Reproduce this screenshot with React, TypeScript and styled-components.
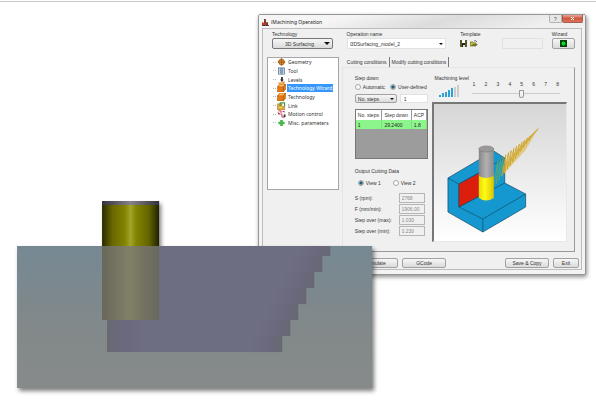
import React from "react";
import styled, { createGlobalStyle, css } from "styled-components";

const GlobalStyle = createGlobalStyle`
  * { box-sizing: border-box; }
  body { margin: 0; background: #fff; }
  button, input, select { font: inherit; color: inherit; margin: 0; }
`;

const Page = styled.main`
  position: relative;
  min-height: 100vh;
  padding-top: 1px;
  font: 5px/8px "Liberation Sans", Arial, sans-serif;
  color: #333;
`;

const Rule = styled.hr`
  height: 1px;
  margin: 0 0 12px;
  border: 0;
  background: #c4c8c6;
`;

const Dialog = styled.section`
  margin: 0 10px 0 43.3%;
  padding: 0 3px 4px;
  border: 1px solid #969696;
  border-radius: 2px;
  background: #f3f3f3;
  box-shadow: 1px 2px 4px rgba(0, 0, 0, 0.45);
`;

const TitleBar = styled.header`
  display: flex;
  align-items: center;
  height: 13px;
  margin: 0 -3px;
  padding: 0 2px 0 3px;
  gap: 2px;
  background: linear-gradient(165deg, #f5f5f5 25%, #dcdcdc 55%, #efefef 85%);
`;

const Title = styled.h1`
  flex: 1;
  margin: 0;
  font: 5px/8px "Noto Sans", sans-serif;
  color: #222;
`;

const WindowButtons = styled.div`
  display: flex;
  align-self: flex-start;
`;

const WindowButton = styled.button<{ $close?: boolean }>`
  display: grid;
  place-items: center;
  width: ${(p) => (p.$close ? 21 : 13)}px;
  height: 8px;
  padding: 0;
  border: 1px solid ${(p) => (p.$close ? "#a65c4e" : "#b2b2b2")};
  border-top: 0;
  border-radius: 0 0 2px 2px;
  color: ${(p) => (p.$close ? "#fff" : "#555")};
  background: ${(p) =>
    p.$close ? "linear-gradient(#eba795, #cf5740 50%, #dd7459)" : "#e6e6e6"};
`;

const Body = styled.div`
  padding: 1px 6px 1px 4px;
  border: 1px solid #bcbcbc;
  background: #f0f0f0;
`;

const FieldBar = styled.div`
  display: flex;
  gap: 9px;
  padding-left: 5px;
`;

const Field = styled.div<{ $grow: number; $inset?: boolean }>`
  flex: ${(p) => p.$grow} 1 0;
  min-width: 0;
  padding-right: ${(p) => (p.$inset ? 5 : 0)}px;
`;

const Caption = styled.label`
  display: block;
  white-space: nowrap;
`;

const raised = css`
  border: 1px solid #a2a2a2;
  border-radius: 2px;
  background: linear-gradient(#f6f6f6, #e9e9e9 50%, #dadada);
`;

const PickerButton = styled.button`
  ${raised}
  display: flex;
  align-items: center;
  width: 100%;
  height: 11px;
  padding: 0 2px 0 12px;
  justify-content: space-between;
  border-color: #777;
`;

const Combo = styled.div`
  display: flex;
  align-items: center;
  height: 11px;
  padding: 0 2px;
  border: 1px solid #e2e2e2;
  background: #fff;
`;

const ComboInput = styled.input`
  flex: 1;
  min-width: 0;
  padding: 0;
  border: 0;
  outline: 0;
  background: none;
`;

const BareButton = styled.button`
  display: grid;
  place-items: center;
  padding: 0;
  border: 0;
  background: none;
`;

const TemplateTools = styled.div`
  display: flex;
  align-items: center;
  gap: 3px;
`;

const TemplateName = styled.input`
  width: 50%;
  min-width: 0;
  height: 11px;
  margin-left: auto;
  border: 1px solid #e0e0e0;
  background: #f0f0f0;
`;

const WizardButton = styled.button`
  ${raised}
  display: grid;
  place-items: center;
  width: 100%;
  height: 11px;
  padding: 0;
`;

const Columns = styled.div`
  display: grid;
  grid-template-columns: 72fr 234fr;
  gap: 3px;
  margin-top: 8px;
`;

const Tree = styled.ul`
  margin: 0 0 62px;
  padding: 0 0 0 5px;
  border: 1px solid #a5a5a5;
  background: #fff;
  font-family: "Noto Sans", sans-serif;
  list-style: none;
`;

const TreeItem = styled.li`
  display: flex;
  align-items: center;
  height: 9px;
  gap: 1px;
  &::before {
    content: "";
    width: 3px;
    border-top: 1px dotted #bbb;
  }
  &:nth-child(3n + 1) { height: 8px; }
`;

const TreeLink = styled.a<{ $active?: boolean }>`
  padding: 0 1px;
  text-decoration: none;
  white-space: nowrap;
  color: ${(p) => (p.$active ? "#fff" : "#333")};
  background: ${(p) => (p.$active ? "#3597fb" : "none")};
`;

const TabArea = styled.div`
  min-width: 0;
`;

const Tabs = styled.div`
  display: flex;
  height: 10px;
  padding-left: 3px;
`;

const Tab = styled.button`
  padding: 0 2px;
  border: 0;
  border-right: 1px solid #777;
  line-height: 8px;
  background: none;
  white-space: nowrap;
`;

const Panel = styled.div`
  display: grid;
  grid-template-columns: 73fr 136fr;
  gap: 4px;
  padding: 6px 7px 9px 12px;
  border: 1px solid #e4e4e4;
  border-right-color: #999;
  border-bottom-color: #999;
`;

const Side = styled.div`
  min-width: 0;
`;

const RadioRow = styled.div<{ $spaced?: boolean }>`
  display: flex;
  gap: ${(p) => (p.$spaced ? 12 : 5)}px;
  margin: ${(p) => (p.$spaced ? "4px 0 6px 3px" : "1px 0 3px")};
`;

const RadioLabel = styled.label`
  display: flex;
  align-items: center;
  gap: 2px;
  white-space: nowrap;
`;

const Radio = styled.input`
  appearance: none;
  width: 6px;
  height: 6px;
  border: 1px solid #a5a5a5;
  border-radius: 50%;
  background: #fff;
  &:checked { background: radial-gradient(#1f5f80 40%, #b9d5e0 75%); }
`;

const StepRow = styled.div`
  display: flex;
  gap: 3px;
`;

const SelectBox = styled.div`
  ${raised}
  display: flex;
  align-items: center;
  width: 42px;
  height: 9px;
  padding-right: 2px;
`;

const Select = styled.select`
  appearance: none;
  flex: 1;
  min-width: 0;
  height: 8px;
  padding: 0 2px;
  border: 0;
  background: none;
`;

const StepInput = styled.input`
  flex: 1;
  min-width: 0;
  height: 9px;
  padding: 0 3px;
  border: 1px solid #e2e2e2;
  background: #fff;
`;

const TableBox = styled.div`
  height: 50px;
  margin: 6px 0 8px;
  border: 1px solid #777;
  background: #9c9c9c;
`;

const Table = styled.table`
  width: 100%;
  border-collapse: collapse;
  th, td {
    height: 10px;
    padding: 0 0 0 2px;
    border-right: 1px solid #999;
    text-align: left;
    font-weight: 400;
    white-space: nowrap;
  }
  th { background: #fff; }
  td { height: 9px; background: #8cf58c; border-color: #7fe07f; color: #222; }
`;

const Readings = styled.div`
  display: grid;
  grid-template-columns: 1fr 26px;
  row-gap: 1px;
  padding-right: 3px;
`;

const ReadingLabel = styled.label`
  line-height: 10px;
  white-space: nowrap;
`;

const ReadingInput = styled.input`
  width: 100%;
  height: 10px;
  padding: 0 2px;
  border: 1px solid #b5b5b5;
  background: #f0f0f0;
  color: #888;
`;

const LevelBar = styled.div`
  display: grid;
  grid-template-columns: 37px 1fr;
  height: 28px;
  padding: 0 7px 0 3px;
`;

const LevelBars = styled.div`
  display: flex;
  align-items: flex-end;
  gap: 1px;
  height: 12px;
  padding-left: 4px;
  margin-top: 3px;
`;

const LevelBarItem = styled.i<{ $height: number; $on: boolean }>`
  width: 2px;
  height: ${(p) => p.$height}px;
  background: ${(p) => (p.$on ? "#2fa0d2" : "#ccc")};
`;

const LevelScale = styled.div`
  padding-top: 6px;
`;

const LevelNumbers = styled.div`
  display: flex;
  justify-content: space-between;
  margin: 0 1px;
`;

const Slider = styled.input`
  appearance: none;
  display: block;
  width: 100%;
  height: 9px;
  margin: 1px 0 0;
  background: linear-gradient(#ccc, #ccc) center / 100% 1px no-repeat;
  &::-webkit-slider-thumb {
    appearance: none;
    width: 5px;
    height: 8px;
    border: 1px solid #999;
    border-radius: 1px 1px 3px 3px;
    background: #f3f3f3;
  }
`;

const Preview = styled.div`
  height: 140px;
  border: 1px solid #e8e8e8;
  border-top: 2px solid #777;
  border-left: 2px solid #777;
  background: linear-gradient(#d6d6d6, #fff);
  svg { display: block; width: 100%; height: 100%; }
`;

const Footer = styled.footer`
  display: flex;
  gap: 4px;
  margin: 6px -4px 0 87px;
`;

const ActionButton = styled.button<{ $small?: boolean; $end?: boolean }>`
  ${raised}
  width: ${(p) => (p.$small ? 26 : 44)}px;
  height: 10px;
  margin-left: ${(p) => (p.$end ? "auto" : 0)};
  padding: 0;
  line-height: 8px;
  white-space: nowrap;
`;

const StockFigure = styled.figure`
  position: absolute;
  top: 201px;
  left: 17px;
  width: 59.6%;
  margin: 0;
  svg {
    display: block;
    width: 100%;
    overflow: visible;
    filter: drop-shadow(2px 3px 2px rgba(0, 0, 0, 0.5));
  }
`;

const Arrow = ({ size }: { size: number }) => (
  <svg width={size} height={size / 2} viewBox="0 0 6 3" aria-hidden="true">
    <path d="M0 0H6L3 3Z" fill="#111" />
  </svg>
);

const treeIcons: Record<string, React.ReactNode> = {
  geometry: (
    <>
      <path d="M0 4.500L2 2L4.500 0L7 2L9 4.500L7 7L4.500 9L2 7Z" fill="#c77a25" />
      <circle cx="4.500" cy="4.500" r="3" fill="#df9133" stroke="#85501e" strokeWidth=".6" />
      <path d="M4.500 1V8M1 4.500H8" stroke="#864b16" strokeWidth=".7" />
    </>
  ),
  tool: (
    <>
      <rect x="1" y="1" width="7" height="7" fill="#dce8f4" stroke="#526e91" strokeWidth=".8" />
      <path d="M3 1V6L4.500 8L6 6V1" fill="#91a8bf" stroke="#526e91" strokeWidth=".6" />
    </>
  ),
  levels: (
    <>
      <path d="M4 1H6V4H7L5 7L3 4H4Z" fill="#333" />
      <path d="M1 8H8M6 7H8" stroke="#dd8a24" strokeWidth="1.4" />
    </>
  ),
  box: (
    <>
      <path d="M0 3L2.500 0H9V6L6.500 9H0Z" fill="#e77b13" stroke="#8f430b" strokeWidth=".5" />
      <path d="M0 3H6.500V9M6.500 3L9 0" stroke="#8f430b" strokeWidth=".6" fill="none" />
      <path d="M1 2.700L2.800 .6H8L6.300 2.700Z" fill="#ffc061" />
    </>
  ),
  link: (
    <>
      <path d="M0 2H5V5H8V9H0Z" fill="#e2a63a" stroke="#8e6819" strokeWidth=".5" />
      <path d="M3 5V1H8V5" fill="none" stroke="#3b9937" strokeWidth="1.200" />
      <path d="M2 6H5" stroke="#fff39a" />
    </>
  ),
  motion: (
    <>
      <path d="M1 1H4V4M5 4V8H8" fill="none" stroke="#be2445" strokeWidth="1" />
      <path d="M0 2L4 5L1 5ZM5 1H8V3Z" fill="#bb2342" />
      <path d="M7 5H9V8H7Z" fill="#333" />
    </>
  ),
  plus: <path d="M3 1H6V3H8V6H6V8H3V6H1V3H3Z" fill="#49b74c" />,
};

const treeItems: { icon: string; text: string; active?: boolean }[] = [
  { icon: "geometry", text: "Geometry" },
  { icon: "tool", text: "Tool" },
  { icon: "levels", text: "Levels" },
  { icon: "box", text: "Technology Wizard", active: true },
  { icon: "box", text: "Technology" },
  { icon: "link", text: "Link" },
  { icon: "motion", text: "Motion control" },
  { icon: "plus", text: "Misc. parameters" },
];

const readings = [
  { id: "spin", label: "S (rpm):", value: "2768" },
  { id: "feed", label: "F (mm/min):", value: "1906.00" },
  { id: "over-max", label: "Step over (max):", value: "1.030" },
  { id: "over-min", label: "Step over (min):", value: "0.230" },
];

const levels = [1, 2, 3, 4, 5, 6, 7, 8];

const barHeights = [2, 4, 5, 7, 9, 10, 12];

const toolPathLines = Array.from({ length: 16 }, (_, i) => ({
  x: 60 + i * 2.7,
  top: 57 - i * 2.1,
  bottom: 83 - i * 3.6,
  green: i < 3,
}));

const PartDrawing = () => (
  <svg viewBox="0 0 133 137" preserveAspectRatio="none" role="img" aria-label="Part and tool">
    <defs>
      <linearGradient id="shank">
        <stop stopColor="#858585" />
        <stop offset=".5" stopColor="#b1b1b1" />
        <stop offset="1" stopColor="#8b8b8b" />
      </linearGradient>
      <linearGradient id="flute">
        <stop stopColor="#e4dc00" />
        <stop offset=".4" stopColor="#fffb16" />
        <stop offset="1" stopColor="#dcc400" />
      </linearGradient>
    </defs>
    <g stroke="#174d68" strokeWidth=".7" strokeLinejoin="round">
      <path d="M14 74L60 47L71 54V79L92 90V103L49 128L14 108Z" fill="#1597cf" />
      <path d="M14 74L25 80V103L71 79M25 80L71 54M25 103L49 115L92 90M49 115V128" fill="none" />
      <path d="M25 80L51 66V89L25 103Z" fill="#dc1f0c" />
    </g>
    <path d="M68 64L106 22L92 46L70 70Z" fill="#dcb544" opacity=".6" />
    {toolPathLines.map((l) => (
      <path
        key={l.x}
        d={`M${l.x} ${l.bottom}L${l.x + 4} ${l.top}L${l.x + 2.7} ${l.bottom - 3}`}
        stroke={l.green ? "#57a878" : "#d0a52a"}
        strokeWidth=".9"
        fill="none"
      />
    ))}
    <path d="M45 70V94Q52 99 60 94V70Z" fill="url(#flute)" />
    <path d="M45 46V72Q52 76 60 72V46Z" fill="url(#shank)" />
    <ellipse cx="52.500" cy="45" rx="7.500" ry="3" fill="#999" stroke="#777" strokeWidth=".6" />
  </svg>
);

const stepEdges = [313, 305, 297, 289, 281, 273, 265];

const StockDrawing = () => (
  <svg viewBox="0 0 355 187" role="img" aria-label="Tool cutting through stock">
    <defs>
      <linearGradient id="stock" x2="0" y2="1">
        <stop stopColor="#768993" />
        <stop offset=".3" stopColor="#7c888e" />
        <stop offset=".65" stopColor="#838989" />
        <stop offset="1" stopColor="#868a8b" />
      </linearGradient>
      <linearGradient id="cutter">
        <stop stopColor="#292900" />
        <stop offset=".18" stopColor="#686700" />
        <stop offset=".4" stopColor="#838300" />
        <stop offset=".5" stopColor="#a2a32b" />
        <stop offset=".6" stopColor="#828300" />
        <stop offset=".82" stopColor="#646400" />
        <stop offset="1" stopColor="#202000" />
      </linearGradient>
      <linearGradient id="cap">
        <stop stopColor="#333139" />
        <stop offset=".5" stopColor="#85828a" />
        <stop offset="1" stopColor="#333139" />
      </linearGradient>
      <linearGradient id="sunk">
        <stop stopColor="#686758" />
        <stop offset=".2" stopColor="#737261" />
        <stop offset=".5" stopColor="#818067" />
        <stop offset=".65" stopColor="#777663" />
        <stop offset="1" stopColor="#69685e" />
      </linearGradient>
      <linearGradient id="stepShade">
        <stop stopColor="#6e6e82" />
        <stop offset=".5" stopColor="#6a6980" />
        <stop offset="1" stopColor="#686873" />
      </linearGradient>
      <linearGradient id="pocketStart">
        <stop stopColor="#696973" />
        <stop offset=".6" stopColor="#6a6980" />
        <stop offset="1" stopColor="#6e6e82" />
      </linearGradient>
    </defs>
    <path d="M0 45H355V187H0Z" fill="url(#stock)" />
    <path
      d="M90 45H313V55H305V71H297V87H289V103H281V119H273V135H265V151H90Z"
      fill="#6e6e82"
    />
    {stepEdges.map((right, i) => (
      <rect
        key={right}
        x={right - 32}
        y={i === 0 ? 45 : 39 + i * 16}
        width="32"
        height={i === 0 ? 10 : 16}
        fill="url(#stepShade)"
      />
    ))}
    <path d="M90 119H126V151H90Z" fill="url(#pocketStart)" />
    <path d="M85 0H142V45H85Z" fill="url(#cutter)" />
    <path d="M85 0H142V4H85Z" fill="url(#cap)" />
    <path d="M85 45H142V119H85Z" fill="url(#sunk)" />
  </svg>
);

export default function App() {
  return (
    <>
      <GlobalStyle />
      <Page>
        <Rule />
        <Dialog aria-label="iMachining Operation">
          <TitleBar>
            <svg width="7" height="8" viewBox="0 0 7 8" aria-hidden="true">
              <path d="M0 7V4L2 5V1H4V5L6 4V7Z" fill="#b33b2c" />
              <path d="M3 1V5M0 7.500H7M5 4V7" stroke="#553b37" />
            </svg>
            <Title>iMachining Operation</Title>
            <WindowButtons>
              <WindowButton aria-label="Help">?</WindowButton>
              <WindowButton $close aria-label="Close">
                <svg width="5" height="5" viewBox="0 0 5 5">
                  <path d="M1 1L4 4M4 1L1 4" stroke="#fff" />
                </svg>
              </WindowButton>
            </WindowButtons>
          </TitleBar>
          <Body>
            <FieldBar>
              <Field $grow={60} $inset>
                <Caption htmlFor="technology">Technology</Caption>
                <PickerButton id="technology">
                  3D Surfacing
                  <Arrow size={6} />
                </PickerButton>
              </Field>
              <Field $grow={99} $inset>
                <Caption htmlFor="operation">Operation name</Caption>
                <Combo>
                  <ComboInput id="operation" defaultValue="i3DSurfacing_model_2" />
                  <BareButton aria-label="Show operation names">
                    <Arrow size={4} />
                  </BareButton>
                </Combo>
              </Field>
              <Field $grow={82}>
                <Caption htmlFor="template">Template</Caption>
                <TemplateTools>
                  <BareButton aria-label="Save template">
                    <svg width="7" height="7" viewBox="0 0 7 7">
                      <path d="M0 0H7V7H0Z" fill="#24241c" />
                      <path d="M2 0H5V3H2Z" fill="#fff" />
                      <path d="M1 0V7M6 0V7" stroke="#8b8a32" />
                      <path d="M3 5H5V7H3Z" fill="#ddd" />
                    </svg>
                  </BareButton>
                  <BareButton aria-label="Open template">
                    <svg width="8" height="7" viewBox="0 0 8 7">
                      <path d="M0 2H3L4 3H6V6H0Z" fill="#c4bd42" stroke="#57561c" strokeWidth=".6" />
                      <path d="M1 6L3 4H8L6 6Z" fill="#777423" />
                      <path d="M4 1Q6 0 7 2" stroke="#333" strokeWidth=".7" fill="none" />
                    </svg>
                  </BareButton>
                  <TemplateName id="template" disabled />
                </TemplateTools>
              </Field>
              <Field $grow={23}>
                <Caption htmlFor="wizard">Wizard</Caption>
                <WizardButton id="wizard">
                  <svg width="7" height="7" viewBox="0 0 7 7">
                    <path d="M0 0H7V7H0Z" fill="#07420b" />
                    <circle cx="3.500" cy="3.500" r="2" fill="#12d92a" />
                  </svg>
                </WizardButton>
              </Field>
            </FieldBar>
            <Columns>
              <Tree>
                {treeItems.map((item) => (
                  <TreeItem key={item.text}>
                    <svg width="9" height="8" viewBox="0 0 9 9" aria-hidden="true">
                      {treeIcons[item.icon]}
                    </svg>
                    <TreeLink href="#" $active={item.active}>
                      {item.text}
                    </TreeLink>
                  </TreeItem>
                ))}
              </Tree>
              <TabArea>
                <Tabs role="tablist">
                  <Tab role="tab" aria-selected="true">Cutting conditions</Tab>
                  <Tab role="tab" aria-selected="false">Modify cutting conditions</Tab>
                </Tabs>
                <Panel role="tabpanel">
                  <Side>
                    <Caption as="div">Step down</Caption>
                    <RadioRow>
                      <RadioLabel>
                        <Radio type="radio" name="step" />
                        Automatic
                      </RadioLabel>
                      <RadioLabel>
                        <Radio type="radio" name="step" defaultChecked />
                        User-defined
                      </RadioLabel>
                    </RadioRow>
                    <StepRow>
                      <SelectBox>
                        <Select aria-label="Step type">
                          <option>No. steps</option>
                        </Select>
                        <Arrow size={4} />
                      </SelectBox>
                      <StepInput aria-label="Number of steps" defaultValue="1" />
                    </StepRow>
                    <TableBox>
                      <Table>
                        <thead>
                          <tr>
                            <th>No. steps</th>
                            <th>Step down</th>
                            <th>ACP</th>
                          </tr>
                        </thead>
                        <tbody>
                          <tr>
                            <td>1</td>
                            <td>29.2400</td>
                            <td>1.8</td>
                          </tr>
                        </tbody>
                      </Table>
                    </TableBox>
                    <Caption as="div">Output Cutting Data</Caption>
                    <RadioRow $spaced>
                      <RadioLabel>
                        <Radio type="radio" name="view" defaultChecked />
                        View 1
                      </RadioLabel>
                      <RadioLabel>
                        <Radio type="radio" name="view" />
                        View 2
                      </RadioLabel>
                    </RadioRow>
                    <Readings>
                      {readings.map((r) => (
                        <React.Fragment key={r.id}>
                          <ReadingLabel htmlFor={r.id}>{r.label}</ReadingLabel>
                          <ReadingInput id={r.id} defaultValue={r.value} disabled />
                        </React.Fragment>
                      ))}
                    </Readings>
                  </Side>
                  <Side>
                    <LevelBar>
                      <div>
                        <Caption htmlFor="level">Machining level</Caption>
                        <LevelBars>
                          {barHeights.map((h, i) => (
                            <LevelBarItem key={h} $height={h} $on={i < 5} />
                          ))}
                        </LevelBars>
                      </div>
                      <LevelScale>
                        <LevelNumbers>
                          {levels.map((n) => (
                            <span key={n}>{n}</span>
                          ))}
                        </LevelNumbers>
                        <Slider id="level" type="range" min="1" max="8" defaultValue="5" />
                      </LevelScale>
                    </LevelBar>
                    <Preview>
                      <PartDrawing />
                    </Preview>
                  </Side>
                </Panel>
              </TabArea>
            </Columns>
            <Footer>
              <ActionButton>Simulate</ActionButton>
              <ActionButton>GCode</ActionButton>
              <ActionButton $end>Save &amp; Copy</ActionButton>
              <ActionButton $small>Exit</ActionButton>
            </Footer>
          </Body>
        </Dialog>
        <StockFigure>
          <StockDrawing />
        </StockFigure>
      </Page>
    </>
  );
}
